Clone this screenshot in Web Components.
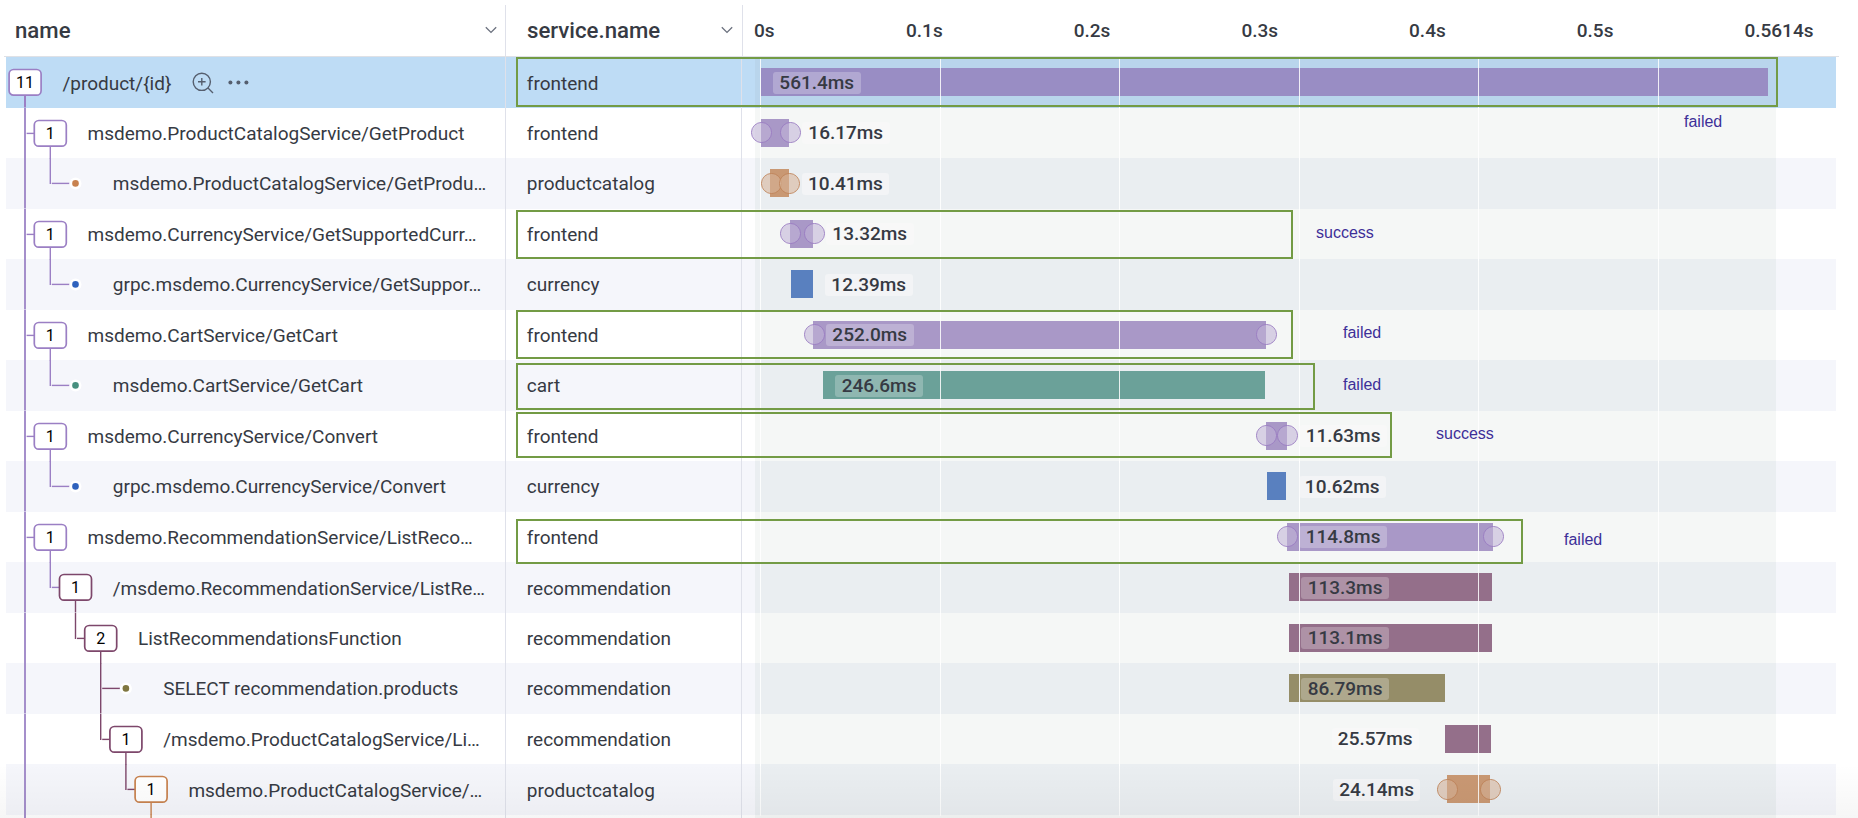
<!DOCTYPE html>
<html lang="en">
<head>
<meta charset="utf-8">
<title>Trace</title>
<style>
  html, body { margin: 0; height: 100%; overflow: hidden; background: #fff; }
  body { font-family: Roboto, "Liberation Sans", sans-serif; font-size: 19px; color: #363a43; }
</style>
</head>
<body>
<trace-view></trace-view>

<script>
// Colours of each service: line is used in the tree, fill in the timeline
const COLORS = {
  frontend: { line: "#9b7fc4", fill: "#a998c7", cap: "#9a7cc2" },
  root: { line: "#9b7fc4", fill: "#998dc4", cap: "#9a7cc2" },
  productcatalog: { line: "#c8824f", fill: "#c99873", cap: "#c0845a" },
  currency: { line: "#2f62bd", fill: "#5980bf" },
  cart: { line: "#47907f", fill: "#6ba199" },
  recommendation: { line: "#7d476b", fill: "#946f8a" },
  database: { line: "#7f7640", fill: "#958d68" }
};

// start, end and label are pixels along the timeline, which begins at 742
const spans = [
  { level: 0, count: 11, name: "/product/{id}", service: "frontend", color: "root", start: 19, end: 1026, label: 31.5, time: "561.4ms", selected: true },
  { level: 1, count: 1, name: "msdemo.ProductCatalogService/GetProduct", service: "frontend", start: 19, end: 47, label: 60.5, time: "16.17ms", caps: [9, 38] },
  { level: 2, name: "msdemo.ProductCatalogService/GetProdu…", service: "productcatalog", start: 28, end: 47, label: 60.2, time: "10.41ms", caps: [19, 37] },
  { level: 1, count: 1, name: "msdemo.CurrencyService/GetSupportedCurr…", service: "frontend", start: 48, end: 71, label: 84.5, time: "13.32ms", caps: [38, 62] },
  { level: 2, name: "grpc.msdemo.CurrencyService/GetSuppor…", service: "currency", start: 49, end: 71, label: 83.5, time: "12.39ms" },
  { level: 1, count: 1, name: "msdemo.CartService/GetCart", service: "frontend", start: 71, end: 524, label: 84.5, time: "252.0ms", caps: [62, 514] },
  { level: 2, name: "msdemo.CartService/GetCart", service: "cart", start: 81, end: 523, label: 93.8, time: "246.6ms" },
  { level: 1, count: 1, name: "msdemo.CurrencyService/Convert", service: "frontend", start: 524, end: 545, label: 557.8, time: "11.63ms", caps: [514, 535] },
  { level: 2, name: "grpc.msdemo.CurrencyService/Convert", service: "currency", start: 525, end: 544, label: 557, time: "10.62ms" },
  { level: 1, count: 1, name: "msdemo.RecommendationService/ListReco…", service: "frontend", start: 545, end: 751, label: 557.8, time: "114.8ms", caps: [535, 741] },
  { level: 2, count: 1, name: "/msdemo.RecommendationService/ListRe…", service: "recommendation", start: 547, end: 750, label: 559.8, time: "113.3ms" },
  { level: 3, count: 2, name: "ListRecommendationsFunction", service: "recommendation", start: 547, end: 750, label: 559.8, time: "113.1ms" },
  { level: 4, name: "SELECT recommendation.products", service: "recommendation", color: "database", start: 547, end: 703, label: 559.8, time: "86.79ms", more: true },
  { level: 4, count: 1, name: "/msdemo.ProductCatalogService/Li…", service: "recommendation", start: 703, end: 749, label: 590, time: "25.57ms" },
  { level: 5, count: 1, name: "msdemo.ProductCatalogService/…", service: "productcatalog", start: 705, end: 748, label: 591.3, time: "24.14ms", caps: [695, 738] }
];

const boxes = [
  { x: 516, y: 57, w: 1262, h: 50, text: "failed", tx: 1684, ty: 113 },
  { x: 516, y: 210, w: 777, h: 49, text: "success", tx: 1316, ty: 224 },
  { x: 516, y: 310, w: 777, h: 49, text: "failed", tx: 1343, ty: 324 },
  { x: 516, y: 363, w: 799, h: 47, text: "failed", tx: 1343, ty: 376 },
  { x: 516, y: 412, w: 876, h: 46, text: "success", tx: 1436, ty: 425 },
  { x: 516, y: 519, w: 1007, h: 45, text: "failed", tx: 1564, ty: 531 }
];

// Column title with its menu arrow
class ColumnTitle extends HTMLElement {
  constructor() {
    super();
    this.attachShadow({ mode: "open" });
  }
  connectedCallback() {
    this.shadowRoot.innerHTML = `
      <style>
        :host {
          display: flex;
          align-items: center;
          justify-content: space-between;
          box-sizing: border-box;
          border-right: 1px solid #dfe1ea;
          font-size: 22.2px;
          font-weight: 500;
        }
        svg { display: block; }
      </style>
      <slot></slot>
      <svg width="12" height="8" viewBox="0 0 12 8" fill="none" stroke="#6b717e" stroke-width="1.3">
        <path d="M.8 1.2 6 6.4l5.2-5.2"/>
      </svg>
    `;
  }
}
customElements.define("column-title", ColumnTitle);

// Time scale over the timeline
class TimeRuler extends HTMLElement {
  constructor() {
    super();
    this.attachShadow({ mode: "open" });
  }
  connectedCallback() {
    const ticks = this.getAttribute("ticks").split(" ");
    this.shadowRoot.innerHTML = `
      <style>
        :host {
          display: grid;
          grid-template-columns: 152px repeat(5, 167.7px) 1fr;
          align-items: center;
          font-weight: 500;
        }
      </style>
      ${ticks.map((tick) => `<span>${tick}</span>`).join("")}
    `;
  }
}
customElements.define("time-ruler", TimeRuler);

// Lines, badge or dot to the left of the name
class TreeNode extends HTMLElement {
  constructor() {
    super();
    this.attachShadow({ mode: "open" });
  }
  connectedCallback() {
    const { span, parent } = this;
    const center = (level) => 19.1 + level * 25.2;
    const x = center(span.level);
    const color = COLORS[span.color || span.service].line;
    let lines = "";
    if (span.level > 0) {
      const px = center(span.level - 1);
      const pcolor = COLORS[parent.color || parent.service].line;
      lines += `<path d="M19 0V50.5" stroke="#a58fcb" stroke-width="2"/>`;
      if (span.level > 1) {
        lines += `<path d="M${px} 0V${span.more ? 50.5 : 26}" stroke="${pcolor}"/>`;
      }
      lines += `<path d="M${px + 1.5} 25.4H${span.count ? x - 16 : x - 6}" stroke="${pcolor}"/>`;
    }
    if (span.count) {
      lines += `<path d="M${span.level ? x : 19} 39V50.5" stroke="${color}" stroke-width="${span.level ? 1.4 : 2}"/>`;
      lines += `<rect x="${x - 16}" y="12.5" width="32" height="25.7" rx="4.5" fill="#fff" stroke="${color}" stroke-width="1.7"/>`;
    } else {
      lines += `<circle cx="${x}" cy="25.4" r="6" fill="#fff"/><circle cx="${x}" cy="25.4" r="3.3" fill="${color}"/>`;
    }
    this.shadowRoot.innerHTML = `
      <style>
        :host {
          display: flex;
          position: relative;
          flex: none;
          justify-content: flex-end;
          box-sizing: border-box;
          width: ${x + 16.7}px;
          height: 100%;
        }
        svg { position: absolute; left: 0; top: 0; overflow: visible; }
        b {
          position: relative;
          width: 33.4px;
          color: #000;
          font-size: 16px;
          font-weight: 400;
          line-height: 52.4px;
          text-align: center;
        }
      </style>
      <svg width="200" height="50.5" fill="none" stroke-width="1.4">${lines}</svg>
      ${span.count ? `<b>${span.count}</b>` : ""}
    `;
  }
}
customElements.define("tree-node", TreeNode);

// Zoom and more icons of the selected row
class RowActions extends HTMLElement {
  constructor() {
    super();
    this.attachShadow({ mode: "open" });
  }
  connectedCallback() {
    this.shadowRoot.innerHTML = `
      <style>
        :host { display: flex; align-items: center; gap: 13.4px; margin-left: 20.4px; }
        svg { display: block; }
      </style>
      <svg width="22" height="22" viewBox="0 0 22 22" fill="none" stroke="#555e6e" stroke-width="1.4">
        <circle cx="9.8" cy="9.8" r="8.6"/>
        <path d="M16 16l5 5M9.8 6v7.6M6 9.8h7.6"/>
      </svg>
      <svg width="22" height="22" viewBox="0 0 22 22" fill="#555e6e">
        <circle cx="3.4" cy="10.5" r="2"/><circle cx="11.4" cy="10.5" r="2"/><circle cx="19.4" cy="10.5" r="2"/>
      </svg>
    `;
  }
}
customElements.define("row-actions", RowActions);

// Bar of the timeline with its duration
class SpanBar extends HTMLElement {
  constructor() {
    super();
    this.attachShadow({ mode: "open" });
  }
  connectedCallback() {
    const { span } = this;
    const color = COLORS[span.color || span.service];
    const caps = (span.caps || []).map((x) => `<i style="left:${x}px"></i>`).join("");
    this.shadowRoot.innerHTML = `
      <style>
        :host { display: block; position: relative; height: 100%; }
        .bar {
          position: absolute;
          top: 11px;
          left: ${span.start}px;
          width: ${span.end - span.start}px;
          height: 28.4px;
          background: ${color.fill};
        }
        .grid { position: absolute; inset: 0 auto 0 18px; width: 1016px; }
        .grid u { position: absolute; top: 0; bottom: 0; width: 1px; background: rgba(255,255,255,.85); }
        i {
          position: absolute;
          top: 14.5px;
          box-sizing: border-box;
          width: 21px;
          height: 21px;
          border: 1.2px solid ${color.cap};
          border-radius: 50%;
          background: rgba(255,255,255,.28);
        }
        i::before {
          content: "";
          position: absolute;
          inset: 0;
          border-radius: 50%;
          background: ${color.fill};
          opacity: .42;
        }
        span {
          position: absolute;
          top: 14.5px;
          left: ${span.label - 0.5}px;
          box-sizing: border-box;
          width: 87.5px;
          height: 22px;
          border-radius: 3px;
          background: rgba(250,250,250,.25);
          font-weight: 500;
          line-height: 22px;
          text-align: center;
        }
        span.out { background: rgba(250,250,250,.55); }
      </style>
      <div class="bar"></div>
      <div class="grid">
        <u style="left:0"></u><u style="left:180px"></u><u style="left:359px"></u><u style="left:539px"></u><u style="left:718px"></u><u style="left:898px"></u>
      </div>
      ${caps}
      <span class="${span.label > span.end || span.label < span.start ? "out" : ""}">${span.time}</span>
    `;
  }
}
customElements.define("span-bar", SpanBar);

class SpanRow extends HTMLElement {
  constructor() {
    super();
    this.attachShadow({ mode: "open" });
  }
  connectedCallback() {
    this.shadowRoot.innerHTML = `
      <style>
        :host {
          display: grid;
          grid-template-columns: 500px 236px 1fr;
          height: 50.5px;
          background: var(--row, #fff);
        }
        :host([odd]) { --row: #f5f6fb; --band: #eaeef1; }
        :host([selected]) { --row: #bedcf5; --band: #b9d5ec; }
        .cell {
          display: flex;
          align-items: center;
          box-sizing: border-box;
          min-width: 0;
          height: 100%;
          border-right: 1px solid #dfe1ea;
          white-space: nowrap;
        }
        .name slot[name=label] { display: block; margin-left: 20.6px; }
        .service { padding-left: 20.8px; }
        .time { background: linear-gradient(var(--band, #f5f7f6) 0 0) 12.5px 0 / 1021px 100% no-repeat; }
      </style>
      <div class="cell name"><slot name="node"></slot><slot name="label"></slot><slot name="actions"></slot></div>
      <div class="cell service"><slot name="service"></slot></div>
      <div class="time"><slot name="bar"></slot></div>
    `;
  }
}
customElements.define("span-row", SpanRow);

// Green frame drawn over a row, with its result
class ResultBox extends HTMLElement {
  constructor() {
    super();
    this.attachShadow({ mode: "open" });
  }
  connectedCallback() {
    const { box } = this;
    this.shadowRoot.innerHTML = `
      <style>
        :host { display: block; position: absolute; left: 0; top: 0; }
        div {
          position: absolute;
          left: ${box.x}px;
          top: ${box.y}px;
          box-sizing: border-box;
          width: ${box.w}px;
          height: ${box.h}px;
          border: 2px solid #739b45;
        }
        span {
          position: absolute;
          left: ${box.tx}px;
          top: ${box.ty}px;
          color: #3d2f98;
          font: 16px/18px "Liberation Sans", Arial, sans-serif;
        }
      </style>
      <div></div>
      <span><slot></slot></span>
    `;
  }
}
customElements.define("result-box", ResultBox);

class TraceView extends HTMLElement {
  constructor() {
    super();
    this.attachShadow({ mode: "open" });
  }
  connectedCallback() {
    this.shadowRoot.innerHTML = `
      <style>
        :host { display: block; position: relative; height: 818px; overflow: hidden; }
        header {
          display: grid;
          grid-template-columns: 502px 237px 1fr;
          box-sizing: border-box;
          height: 57px;
          margin: 0 19px 0 4px;
          padding-top: 5px;
          border-bottom: 1px solid #dfe1e6;
        }
        column-title { padding: 0 8.5px 1px 11px; }
        column-title + column-title { padding: 0 9px 1px 21px; }
        time-ruler { padding: 0 0 1px 11px; }
        main { display: flex; flex-direction: column; margin: 0 22px 0 6px; }
        .rest {
          display: grid;
          grid-template-columns: 500px 236px 1fr;
          height: 4px;
        }
        .rest div { border-right: 1px solid #dfe1ea; }
        .rest div:last-child {
          border: 0;
          background: linear-gradient(#f5f7f6 0 0) 12.5px 0 / 1021px 100% no-repeat;
        }
        .fade {
          position: absolute;
          inset: auto 0 0 0;
          height: 54px;
          background: linear-gradient(rgba(0,0,0,0), rgba(0,0,0,.035));
        }
        .tail { position: absolute; left: 0; bottom: 0; }
      </style>
      <header>
        <column-title>name</column-title>
        <column-title>service.name</column-title>
        <time-ruler ticks="0s 0.1s 0.2s 0.3s 0.4s 0.5s 0.5614s"></time-ruler>
      </header>
      <main></main>
      <svg class="tail" width="200" height="4"><path d="M24 0h2v4h-2z" fill="#a58fcb"/><path d="M150.4 0h1.4v4h-1.4z" fill="#c8824f"/></svg>
      <div class="fade"></div>
    `;
    const main = this.shadowRoot.querySelector("main");
    // Last span seen at each level, to find the parent of the next one
    const path = [];
    spans.forEach((span, i) => {
      path[span.level] = span;
      const row = document.createElement("span-row");
      if (i % 2 === 0) row.setAttribute("odd", "");
      if (span.selected) row.setAttribute("selected", "");

      const node = document.createElement("tree-node");
      node.slot = "node";
      node.span = span;
      node.parent = path[span.level - 1];

      const label = document.createElement("span");
      label.slot = "label";
      label.textContent = span.name;

      const service = document.createElement("span");
      service.slot = "service";
      service.textContent = span.service;

      const bar = document.createElement("span-bar");
      bar.slot = "bar";
      bar.span = span;

      row.append(node, label, service, bar);
      if (span.selected) {
        const actions = document.createElement("row-actions");
        actions.slot = "actions";
        row.append(actions);
      }
      main.append(row);
    });
    const rest = document.createElement("div");
    rest.className = "rest";
    rest.innerHTML = "<div></div><div></div><div></div>";
    main.append(rest);

    boxes.forEach((box) => {
      const element = document.createElement("result-box");
      element.box = box;
      element.textContent = box.text;
      this.shadowRoot.append(element);
    });
  }
}
customElements.define("trace-view", TraceView);
</script>
</body>
</html>
